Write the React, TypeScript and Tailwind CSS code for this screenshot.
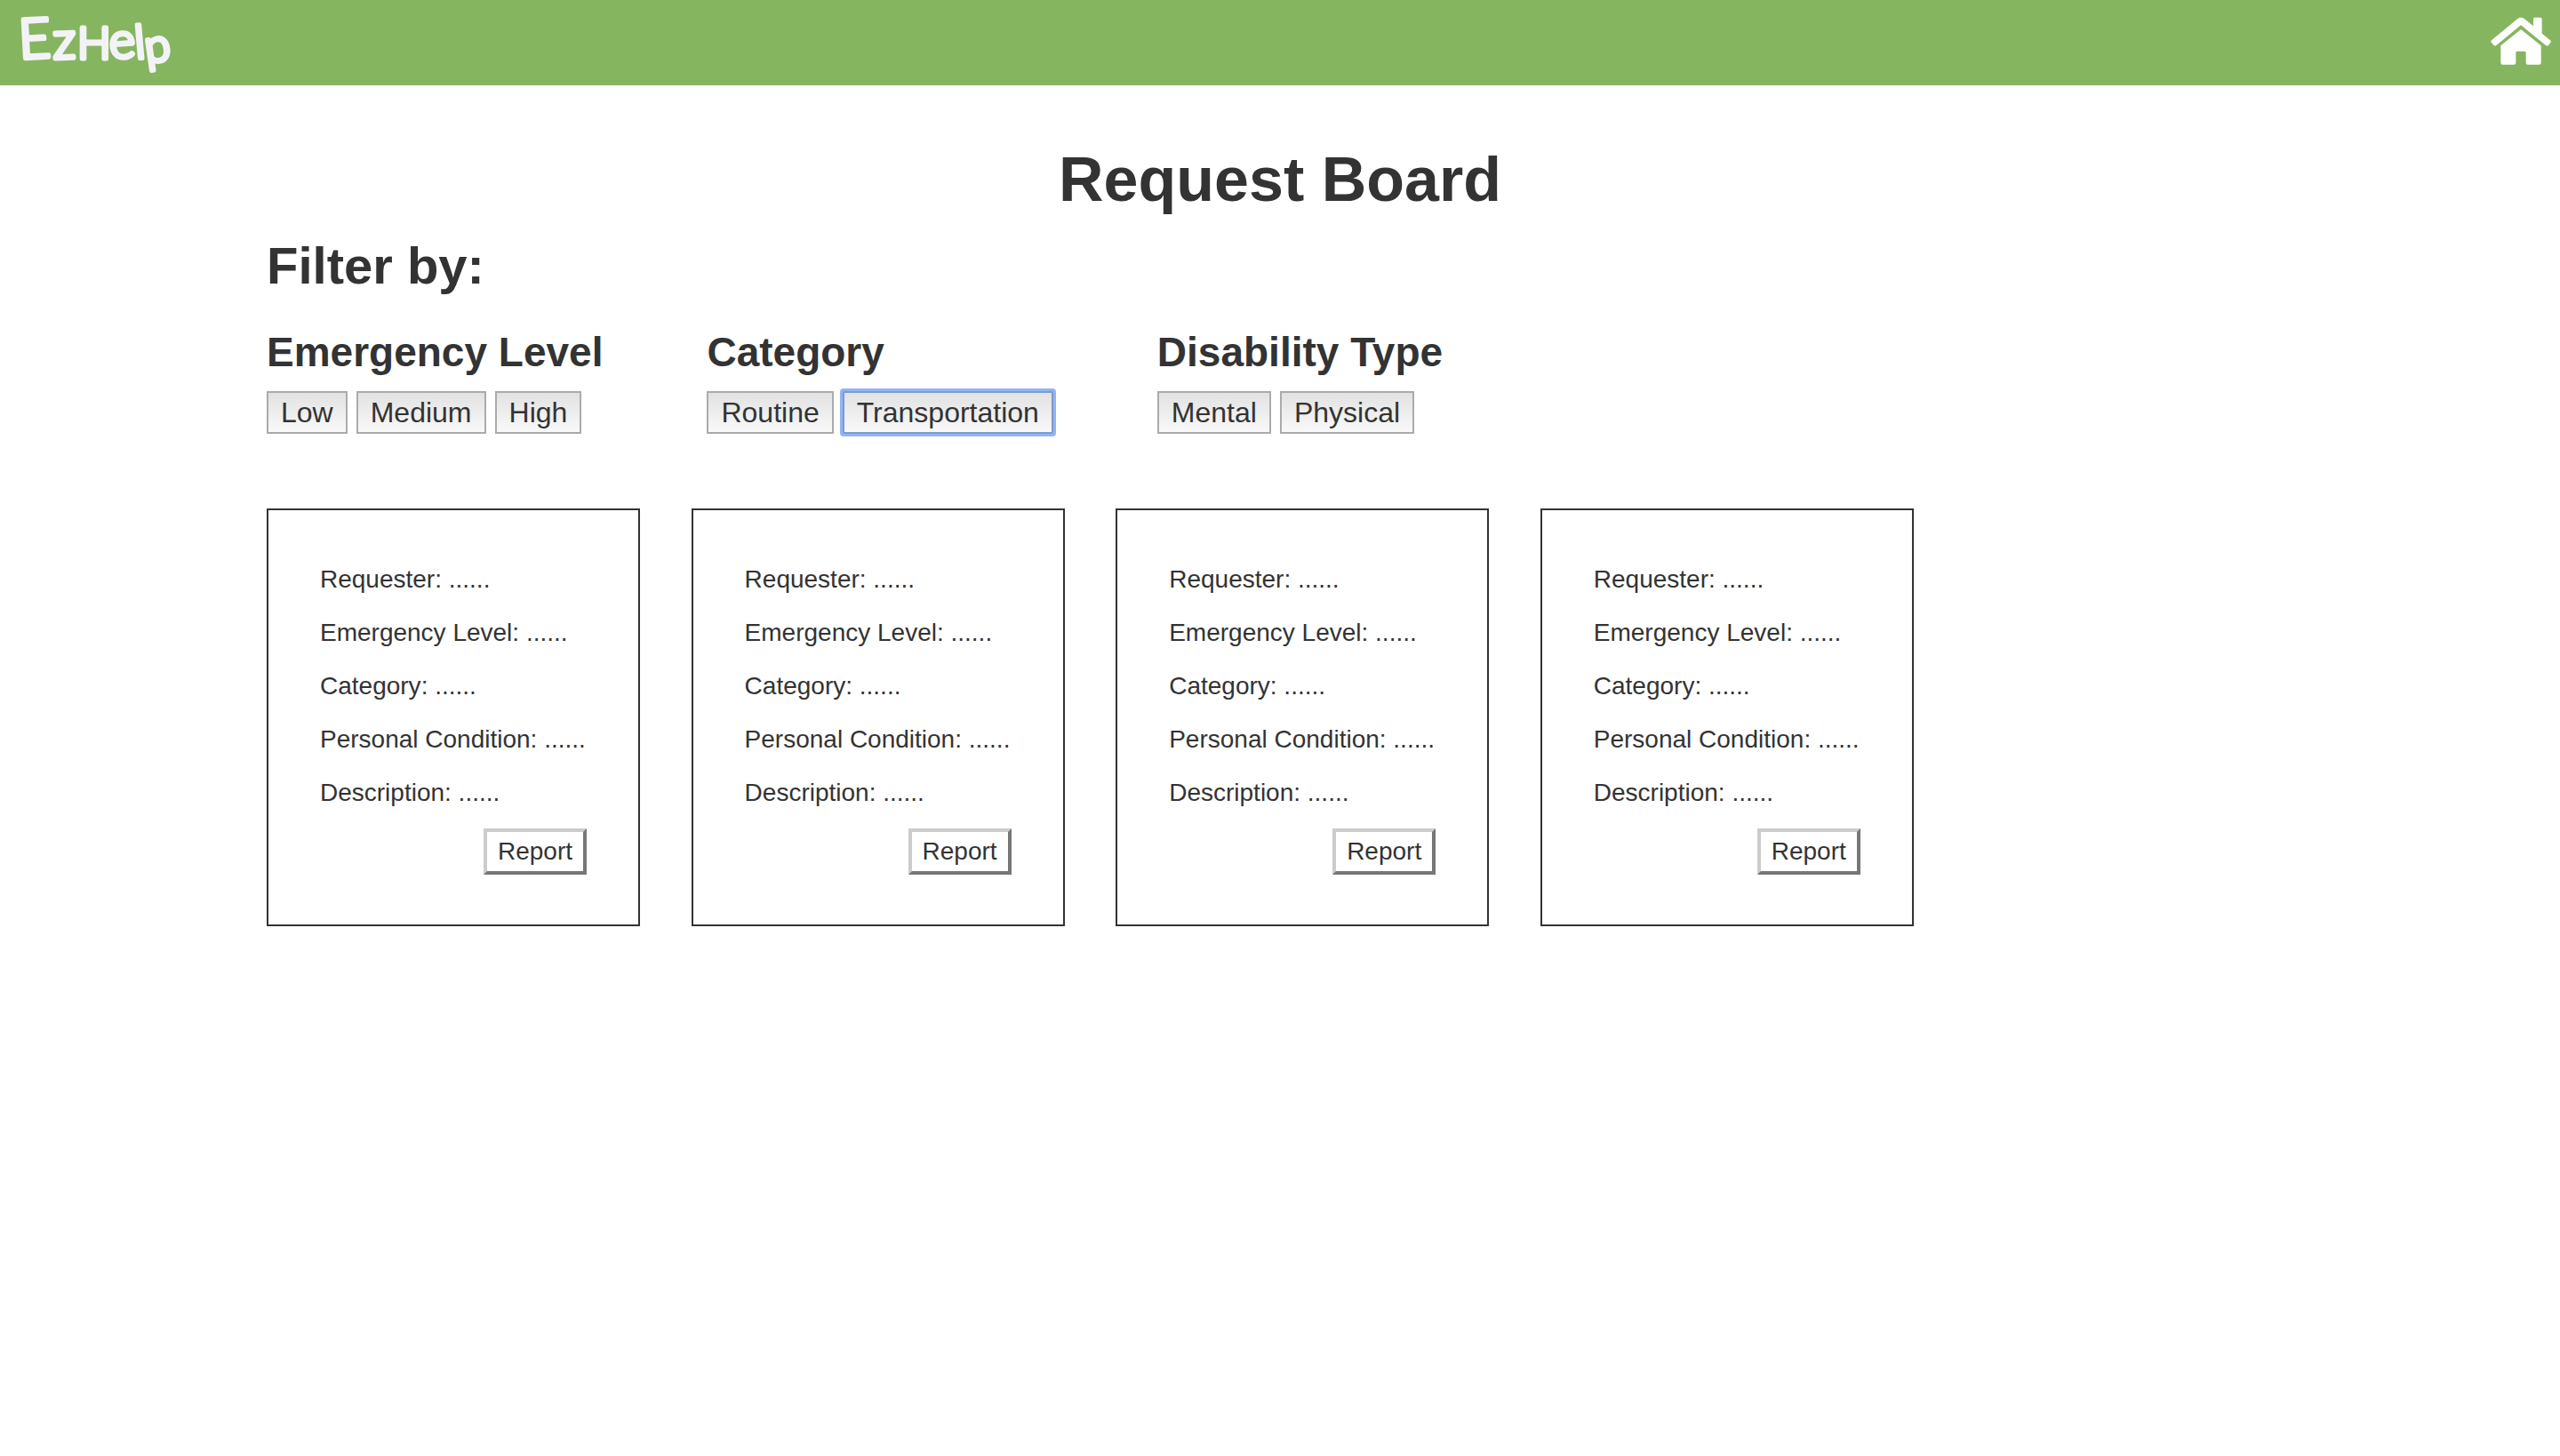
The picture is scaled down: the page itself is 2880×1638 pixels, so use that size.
import React from "react";

const filterGroups = [
  { title: "Emergency Level", options: ["Low", "Medium", "High"] },
  { title: "Category", options: ["Routine", "Transportation"] },
  { title: "Disability Type", options: ["Mental", "Physical"] },
];

const requestFields = [
  "Requester",
  "Emergency Level",
  "Category",
  "Personal Condition",
  "Description",
];

const requests = [1, 2, 3, 4];

function Logo() {
  return (
    <svg
      width="210"
      height="96"
      viewBox="0 0 210 96"
      role="img"
      aria-label="EzHelp"
      fill="#f3f3f7"
      stroke="#f3f3f7"
      strokeWidth="5"
      strokeLinejoin="round"
      fontFamily="Lato, sans-serif"
      fontWeight="300"
    >
      <text y="66">
        <tspan x="22" rotate="-3" fontSize="62">E</tspan>
        <tspan x="60" rotate="-2" fontSize="58">z</tspan>
        <tspan x="87" rotate="0" fontSize="50">H</tspan>
        <tspan x="124" rotate="-4" fontSize="56">e</tspan>
        <tspan x="153" rotate="-5" fontSize="52">l</tspan>
        <tspan x="165" y="71" rotate="-8" fontSize="52">p</tspan>
      </text>
    </svg>
  );
}

function HomeIcon() {
  return (
    <svg width="68" height="54" viewBox="127 55 204 162" fill="#ffffff" aria-hidden="true">
      <path d="M130 134 L219 60 Q229 54 239 60 L271 86 V62 Q271 57 276 57 H295 Q300 57 300 62 V111 L328 134 Q332 138 329 142 L323 150 Q318 155 313 151 L229 83 L146 151 Q141 155 137 150 L130 142 Q126 138 130 134 Z" />
      <path d="M229 97 L297 152 V210 Q297 216 291 216 H252 Q246 216 246 210 V176 Q246 171 241 171 H217 Q212 171 212 176 V210 Q212 216 206 216 H167 Q161 216 161 210 V152 Z" />
    </svg>
  );
}

function FilterButton({ label, active }: { label: string; active: boolean }) {
  const state = active
    ? "border-[#7b9bd0] outline-3 outline-[#92b4f4] rounded-[1px]"
    : "border-[#ababab]";
  return (
    <button
      type="button"
      className={`h-12 border-2 bg-linear-to-b from-[#e2e2e2] to-[#f9f9f9] px-[14px] text-[32px] leading-[44px] ${state}`}
    >
      {label}
    </button>
  );
}

function RequestCard() {
  return (
    <article className="flex w-[420px] flex-col border-2 border-[#333333] px-[58px] pt-[58px] pb-14 text-[28px] leading-10 whitespace-nowrap">
      {requestFields.map((field) => (
        <p key={field} className="mb-5">
          {field}: ......
        </p>
      ))}
      <button
        type="button"
        className="h-[52px] self-end border-4 border-t-[#cccccc] border-r-[#777777] border-b-[#777777] border-l-[#cccccc] bg-white px-3 leading-[44px]"
      >
        Report
      </button>
    </article>
  );
}

export default function App() {
  return (
    <div className="min-h-screen bg-white font-['Liberation_Sans',Arial,sans-serif] text-[#333333]">
      <header className="flex h-24 items-center justify-between bg-[#86b55f] pr-[10px]">
        <a href="#">
          <Logo />
        </a>
        <a href="#" aria-label="Home" className="pb-1">
          <HomeIcon />
        </a>
      </header>

      <main className="px-[300px] pt-[66px]">
        <h1 className="text-center text-[70px] leading-[80px] font-bold">Request Board</h1>
        <h2 className="mt-6 text-[58px] leading-[66px] font-bold">Filter by:</h2>

        <div className="mt-[38px] flex flex-wrap gap-x-[117px] gap-y-10">
          {filterGroups.map((group) => (
            <section key={group.title}>
              <h3 className="text-[46px] leading-[52px] font-bold">{group.title}</h3>
              <div className="mt-[18px] flex gap-[10px]">
                {group.options.map((option) => (
                  <FilterButton
                    key={option}
                    label={option}
                    active={option === "Transportation"}
                  />
                ))}
              </div>
            </section>
          ))}
        </div>

        <div className="mt-[84px] flex flex-wrap gap-x-[2vw] gap-y-14">
          {requests.map((id) => (
            <RequestCard key={id} />
          ))}
        </div>
      </main>
    </div>
  );
}
